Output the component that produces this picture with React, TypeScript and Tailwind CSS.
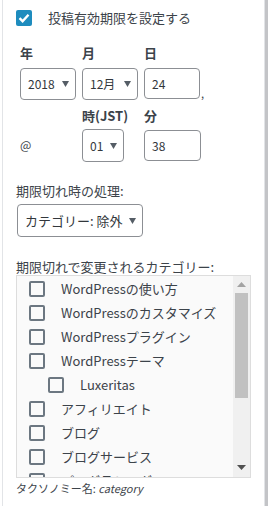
import React from "react";

const font = { fontFamily: '"Noto Sans CJK JP", "Noto Sans", sans-serif' };

function Arrow() {
  return (
    <svg width="7" height="6" viewBox="0 0 7 6" className="shrink-0">
      <path d="M0 0h7L3.5 6z" fill="#555d66" />
    </svg>
  );
}

function Box({ w, children, arrow = true, h = "h-[32px]" }: { w: string; children: React.ReactNode; arrow?: boolean; h?: string }) {
  return (
    <div className={`${w} ${h} flex items-center justify-between pl-[7px] pr-[6px] rounded-[4px] border border-[#8c8f94] bg-white text-[12px] text-[#32373c]`}>
      <span className="whitespace-nowrap">{children}</span>
      {arrow && <Arrow />}
    </div>
  );
}

function Check({ checked = false }: { checked?: boolean }) {
  if (checked)
    return (
      <div className="w-4 h-4 rounded-[2px] bg-[#1e8cbe] flex items-center justify-center shrink-0">
        <svg width="12" height="10" viewBox="0 0 12 10">
          <path d="M1.5 5.2 4.6 8.2 10.5 1.8" stroke="#fff" strokeWidth="2.4" fill="none" />
        </svg>
      </div>
    );
  return <div className="w-4 h-4 rounded-[2px] border-2 border-[#6c7781] bg-transparent shrink-0" />;
}

const cats = [
  { name: "WordPressの使い方" },
  { name: "WordPressのカスタマイズ" },
  { name: "WordPressプラグイン" },
  { name: "WordPressテーマ" },
  { name: "Luxeritas", child: true },
  { name: "アフィリエイト" },
  { name: "ブログ" },
  { name: "ブログサービス" },
  { name: "プログラミング" },
];

export default function App() {
  return (
    <div className="w-[268px] h-[506px] bg-white flex overflow-hidden text-[#3c434a]" style={font}>
      <div className="ml-[2px] w-[263px] border-l border-r border-[#e2e4e7] pl-[13px] pt-[10px]">
        {/* enable */}
        <div className="flex items-center h-4">
          <Check checked />
          <span className="ml-[16px] text-[13px] leading-4">投稿有効期限を設定する</span>
        </div>

        {/* date */}
        <div className="flex pl-[4px] mt-[19px]">
          <div className="w-[62px] flex flex-col">
            <div className="h-4 text-[13px] font-bold leading-4 mb-[7px]">年</div>
            <Box w="w-[56px]">2018</Box>
          </div>
          <div className="w-[62px] flex flex-col">
            <div className="h-4 text-[13px] font-bold leading-4 mb-[7px]">月</div>
            <Box w="w-[56px]">12月</Box>
          </div>
          <div className="flex flex-col">
            <div className="h-4 text-[13px] font-bold leading-4 mb-[7px]">日</div>
            <div className="flex items-end">
              <Box w="w-[56px]" h="h-[31px]" arrow={false}>24</Box>
              <span className="text-[11px] leading-3 ml-[1px]">,</span>
            </div>
          </div>
        </div>

        {/* time */}
        <div className="flex pl-[4px] mt-[8px]">
          <div className="w-[62px] flex flex-col">
            <div className="h-4 mb-[5px]" />
            <div className="h-[32px] flex items-center text-[12px]">@</div>
          </div>
          <div className="w-[62px] flex flex-col">
            <div className="h-4 text-[13px] font-bold leading-4 mb-[5px]">時(JST)</div>
            <Box w="w-[42px]" h="h-[33px]">01</Box>
          </div>
          <div className="flex flex-col">
            <div className="h-4 text-[13px] font-bold leading-4 mb-[6px]">分</div>
            <Box w="w-[57px]" h="h-[31px]" arrow={false}>38</Box>
          </div>
        </div>

        {/* expire action */}
        <div className="mt-[21px] text-[13px] leading-4">期限切れ時の処理:</div>
        <div className="mt-[5px] pl-[1px]">
          <Box w="w-[126px]" h="h-[33px]">
            <span className="text-[13px]">カテゴリー: 除外</span>
          </Box>
        </div>

        {/* categories */}
        <div className="mt-[22px] text-[13px] leading-4">期限切れで変更されるカテゴリー:</div>
        <div className="w-[235px] h-[203px] border border-[#dddddd] flex bg-[#fafafa] bg-[radial-gradient(#e9e9e9_0.6px,transparent_0.7px)] bg-[length:4px_4px]">
          <div className="flex-1 overflow-hidden pt-[1px]">
            {cats.map((c) => (
              <div key={c.name} className={`h-6 flex items-center ${c.child ? "pl-[31px]" : "pl-[12px]"}`}>
                <Check />
                <span className="ml-[16px] text-[13px] text-[#3c434a] whitespace-nowrap">{c.name}</span>
              </div>
            ))}
          </div>
          <div className="w-[17px] bg-[#f0f0f0] flex flex-col items-center">
            <svg width="9" height="5" viewBox="0 0 9 5" className="mt-[6px]">
              <path d="M0 5h9L4.5 0z" fill="#a3a3a3" />
            </svg>
            <div className="mt-[6px] w-[13px] h-[105px] bg-[#c1c1c1]" />
            <div className="flex-1" />
            <svg width="9" height="5" viewBox="0 0 9 5" className="mb-[7px]">
              <path d="M0 0h9L4.5 5z" fill="#505050" />
            </svg>
          </div>
        </div>
        <div className="mt-[2px] text-[11px] leading-4">
          タクソノミー名: <i>category</i>
        </div>
      </div>
      <div className="w-[3px] bg-[#c3c4c7]" />
    </div>
  );
}
